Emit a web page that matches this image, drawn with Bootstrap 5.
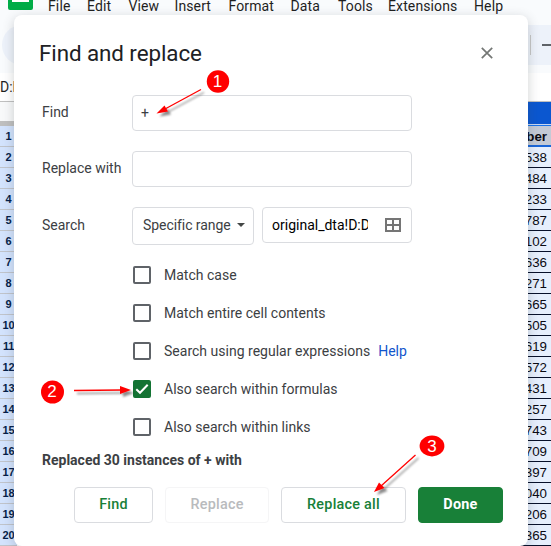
<!DOCTYPE html>
<html lang="en">
<head>
<meta charset="utf-8">
<meta name="viewport" content="width=device-width, initial-scale=1">
<title>Find and replace</title>
<link rel="stylesheet" href="https://cdn.jsdelivr.net/npm/bootstrap@5.3.0/dist/css/bootstrap.min.css">
<style>
body{font-family:Roboto,"Liberation Sans",sans-serif;font-size:14px;line-height:20px;color:#3c4043;height:546px;overflow:hidden;background:#fff}
.sheet{width:551px;height:546px}
.top{height:73px;background:#f9fbfd}
.menus{height:25px;padding-left:8px}
.menu-list{margin-left:15px}
.menus span{letter-spacing:.12px;color:#1f1f1f;line-height:13px;white-space:nowrap;flex:none}
.m1{width:39px}.m2{width:41.500px}.m3{width:46px}.m4{width:54px}.m5{width:62px}.m6{width:47.500px}.m7{width:50px}.m8{width:86px}
.tools{height:40px;margin-left:2px;background:#edf2fa;border-radius:20px 0 0 20px;padding-left:528px}
.formula{height:29px;color:#1f1f1f;line-height:28px;border-bottom:1px solid #c0c0c0}
.rowhead{width:17px;padding-top:19px;background:#f8f9fa}
.rowhead div{height:21px;font:bold 11px/21px "Liberation Sans",sans-serif;color:#041e49;background:#d3e3fd;border-bottom:1px solid #c0c4cb;text-align:center;letter-spacing:-.2px;white-space:nowrap}
.rowhead .corner{height:5px;background:#bfbfbf;border:0}
.cells{width:60px;font:13.33px/21px "Liberation Sans",sans-serif;color:#0a0a12;text-align:right;background:#e6effd}
.cells div{height:21px;padding-right:4px;border-bottom:1px solid #07102a}
.cells .colhead{height:23px;background:#0b57d0;border-bottom:1px solid #c7d7f2}
.cells .title-cell{height:22px;line-height:22px;font-weight:bold;background:#c3cad6;border-top:1px solid #1a73e8;border-bottom:2px solid #1a66d8}
.dialog-box{left:14px;top:15px;width:514px;height:531px;background:#fff;border-radius:8px;box-shadow:0 3px 12px rgba(60,64,67,.24);padding:22px 25px 0 28px}
.heading{font-size:22.4px;line-height:32px;color:#202124;font-weight:400;margin-left:-3px;letter-spacing:-.08px}
.close-ico{margin:5px 10px 0 0}
.fields{margin-top:26px}
.lbl{width:90px;flex:none}
.lbl-up{padding-bottom:2px}
.box{border:1px solid #dadce0;border-radius:4px;height:36px;background:#fff}
.field{width:280px;padding:0 8px}
.gap-a{margin-bottom:20px}
.select-box{width:122px;height:38px;padding:0 8px 2px 10px;letter-spacing:-.06px}
.range-box{width:150px;padding:0 10px 0 9px}
.range-text{width:96px;overflow:hidden;white-space:nowrap;color:#000;letter-spacing:0}
.checks{padding-top:11px}
.check-row{height:38px;padding-left:91px;letter-spacing:.01px}
.tick{width:18px;height:18px;border:2px solid #5f6368;border-radius:2px;margin-right:13px;flex:none}
.tick.on{background:#137333;border-color:#137333}
.help{color:#1155cc;margin-left:8px}
.status{font-weight:700;margin-top:4px}
.actions{margin:17px 0 0 32px}
.act{height:36px;padding:0;border:1px solid #dadce0;border-radius:4px;font-weight:500;font-size:14.4px;line-height:34px;color:#188038;letter-spacing:.25px;flex:none}
.act:disabled{color:#b9bbbd;border-color:#f5f5f6;opacity:1}
.act-done{background:#188038;border-color:#188038;color:#fff;font-weight:700}
.b1{width:79px;margin-right:12px}.b2{width:104px;margin-right:12px}.b3{width:125px;margin-right:12px}.b4{width:85px}
.notes{left:0;top:0}
</style>
</head>
<body>
<div class="sheet position-relative overflow-hidden">
  <div class="top">
    <div class="menus d-flex">
      <svg width="25" height="11" class="flex-shrink-0"><path d="M0 0H25V8Q25 10 23 10H2Q0 10 0 8Z" fill="#00ac47"/><path d="M4 0H21V2H4Z" fill="#fff"/></svg>
      <nav class="menu-list d-flex" aria-label="Menus">
        <span class="m1">File</span><span class="m2">Edit</span><span class="m3">View</span><span class="m4">Insert</span><span class="m5">Format</span><span class="m6">Data</span><span class="m7">Tools</span><span class="m8">Extensions</span><span>Help</span>
      </nav>
    </div>
    <div class="tools d-flex align-items-center"><svg width="21" height="20"><path d="M.5 0V20" stroke="#c7c7c7"/><path d="M12 10H21" stroke="#5f6368" stroke-width="2"/></svg></div>
  </div>
  <div class="formula">D:D</div>
  <div class="d-flex justify-content-between align-items-start">
    <div class="rowhead" id="rowhead"><div class="corner"></div></div>
    <div class="cells" id="cells"><div class="colhead"></div><div class="title-cell">Number</div></div>
  </div>

  <section class="dialog-box position-absolute" role="dialog" aria-label="Find and replace">
    <div class="d-flex justify-content-between">
      <h1 class="heading mb-0">Find and replace</h1>
      <svg class="close-ico" width="12" height="22" viewBox="0 0 12 22"><path d="M.8 5.8L11.2 16.2M11.2 5.8L.8 16.2" stroke="#747775" stroke-width="1.7"/></svg>
    </div>
    <div class="fields">
      <div class="d-flex align-items-center gap-a"><span class="lbl lbl-up">Find</span><div class="box field d-flex align-items-center">+</div></div>
      <div class="d-flex align-items-center gap-a"><span class="lbl lbl-up">Replace with</span><div class="box field"></div></div>
      <div class="d-flex align-items-start">
        <span class="lbl pt-2">Search</span>
        <div class="box select-box d-flex align-items-center justify-content-between"><span>Specific range</span><svg width="8" height="4"><path d="M0 0H8L4 4Z" fill="#444746"/></svg></div>
        <div class="box range-box d-flex align-items-center justify-content-between ms-2"><span class="range-text">original_dta!D:D</span><svg width="16" height="14"><path d="M1 1H15V13H1ZM8 1V13M1 7H15" fill="none" stroke="#757575" stroke-width="2"/></svg></div>
      </div>
    </div>
    <div class="checks">
      <div class="check-row d-flex align-items-center"><span class="tick"></span>Match case</div>
      <div class="check-row d-flex align-items-center"><span class="tick"></span>Match entire cell contents</div>
      <div class="check-row d-flex align-items-center"><span class="tick"></span>Search using regular expressions<a class="help text-decoration-none">Help</a></div>
      <div class="check-row d-flex align-items-center"><span class="tick on d-flex"><svg width="14" height="14" viewBox="0 0 14 14"><path d="M1.300 7.200L5 10.800L12.700 2.800" fill="none" stroke="#fff" stroke-width="2"/></svg></span>Also search within formulas</div>
      <div class="check-row d-flex align-items-center"><span class="tick"></span>Also search within links</div>
    </div>
    <div class="status">Replaced 30 instances of + with</div>
    <div class="actions d-flex">
      <button class="btn act b1">Find</button><button class="btn act b2" disabled>Replace</button><button class="btn act b3">Replace all</button><button class="btn act act-done b4">Done</button>
    </div>
  </section>

  <svg class="notes position-absolute" width="551" height="546" viewBox="0 0 551 546">
    <defs><filter id="sh" x="0" y="0" width="551" height="546" filterUnits="userSpaceOnUse"><feDropShadow dx="3" dy="3" stdDeviation="1.2" flood-color="#000" flood-opacity=".45"/></filter></defs>
    <g filter="url(#sh)" fill="#f00" stroke="#f00">
      <path d="M201 89.500L165 109" stroke-width="1.3"/><path d="M156.500 113.500L164.500 105.500L168 111.500Z" stroke="none"/>
      <path d="M74 390.500L122 390" stroke-width="1.3"/><path d="M131 390L120 386V394Z" stroke="none"/>
      <path d="M415.500 455L381 486" stroke-width="1.3"/><path d="M374 492L379 482.500L384.500 488Z" stroke="none"/>
    </g>
    <g fill="#f00"><circle cx="218" cy="81.500" r="11.200"/><circle cx="52.500" cy="392" r="11.500"/><ellipse cx="432" cy="446" rx="12.400" ry="10.400"/></g>
    <g fill="#fff" font-family="Liberation Sans,sans-serif" font-size="17" text-anchor="middle"><text x="217.500" y="87">1</text><text x="52" y="397">2</text><text x="432" y="451.500">3</text></g>
  </svg>
</div>
<script>
const nums = ['538','484','233','787','102','636','271','665','505','619','572','431','257','743','709','397','040','206','365'];
const add = (id, t) => { const d = document.createElement('div'); d.textContent = t; document.getElementById(id).append(d); };
for (let i = 1; i <= 20; i++) add('rowhead', i);
nums.forEach(n => add('cells', n));
</script>
<script src="https://cdn.jsdelivr.net/npm/bootstrap@5.3.0/dist/js/bootstrap.bundle.min.js"></script>
</body>
</html>
